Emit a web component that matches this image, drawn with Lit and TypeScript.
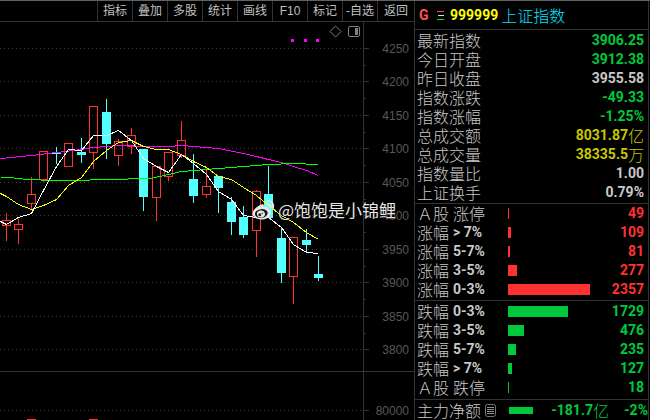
import { LitElement, html, css, svg } from "lit";
import { customElement, property } from "lit/decorators.js";

/** x centre, high, body top, body bottom, low (chart units), rising day */
type Candle = [number, number, number, number, number, boolean];

const CANDLES: Candle[] = [
  [6, 212, 220, 225, 239, true],
  [18, 218, 224, 229, 242, true],
  [31, 176, 194, 203, 208, true],
  [43, 151, 151, 179, 180, true],
  [56, 146, 152, 153, 162, false],
  [68, 143, 143, 166, 166, true],
  [81, 137, 152, 154, 161, false],
  [93, 106, 106, 152, 167, true],
  [106, 98, 112, 143, 157, false],
  [118, 138, 141, 155, 164, true],
  [131, 127, 135, 146, 152, true],
  [143, 149, 149, 196, 209, false],
  [156, 166, 166, 197, 219, true],
  [168, 151, 152, 176, 179, true],
  [181, 120, 140, 155, 156, true],
  [193, 153, 179, 195, 201, false],
  [206, 167, 186, 194, 196, true],
  [218, 176, 176, 187, 211, false],
  [231, 196, 202, 221, 233, false],
  [243, 205, 217, 234, 236, false],
  [256, 189, 191, 230, 255, true],
  [268, 165, 194, 217, 217, false],
  [281, 227, 238, 272, 281, false],
  [293, 237, 237, 276, 302, true],
  [306, 228, 240, 244, 251, false],
  [318, 255, 274, 277, 279, false],
];

const AVERAGES = [
  {
    color: "#ff00ff",
    points:
      "0,158 31,155 56,152 81,149 93,147 106,146 118,145 150,146 168,146 181,145 193,146 218,148 243,153 256,156 268,159 281,162 293,166 306,170 318,175",
  },
  {
    color: "#00ff00",
    points:
      "0,177 13,177 14,178 31,179 50,180 87,180 92,179 125,179 130,178 150,178 168,174 181,171 206,169 218,168 243,166 268,164 293,163 318,164",
  },
  {
    color: "#ffff00",
    points:
      "0,193 6,196 18,204 31,209 43,205 56,199 68,185 81,177 93,161 106,150 118,142 131,140 143,146 156,149 168,149 181,154 193,161 206,167 218,176 231,179 243,187 256,195 268,205 281,215 293,222 306,232 318,239",
  },
  {
    color: "#ffffff",
    points:
      "0,221 6,224 18,217 31,213 43,190 56,166 68,149 81,150 93,135 106,135 118,130 131,140 143,158 156,166 168,172 181,154 193,163 206,174 218,191 231,199 243,215 256,217 268,217 281,227 293,244 306,252 318,253",
  },
];

const LEVELS: [string, number][] = [
  ["4250", 48],
  ["4200", 81],
  ["4150", 115],
  ["4100", 148],
  ["4050", 182],
  ["4000", 215],
  ["3950", 249],
  ["3900", 282],
  ["3850", 316],
  ["3800", 349],
  ["80000", 410],
];
const HALF_LEVELS = [65, 98, 132, 165, 199, 232, 266, 299, 333];

@customElement("kline-chart")
export class KlineChart extends LitElement {
  static styles = css`
    :host {
      display: grid;
      grid-template-columns: minmax(0, 1fr) 51px;
      position: relative;
      min-height: 0;
      overflow: hidden;
    }
    svg {
      display: block;
      width: 100%;
      height: 100%;
    }
    .layer {
      shape-rendering: crispEdges;
      fill: none;
    }
    .grid {
      stroke: #383838;
      stroke-dasharray: 1 3;
    }
    .rule {
      stroke: #333333;
    }
    .up {
      stroke: #ff3232;
    }
    .down {
      stroke: #54ffff;
      fill: #54ffff;
    }
    .mark {
      fill: #ff00ff;
    }
    .volume {
      fill: #ff3232;
    }
    .tool {
      stroke: #808080;
      fill: none;
    }
    .toolfill {
      fill: #808080;
    }
    .scale {
      font: 12px "Liberation Sans", sans-serif;
      fill: #585858;
      text-anchor: end;
    }
    .watermark {
      position: absolute;
      left: 252px;
      top: 176px;
      display: flex;
      align-items: center;
      gap: 3px;
      font: 17px/24px "Noto Sans CJK SC", sans-serif;
      color: #e6e6e6;
      text-shadow: 0 0 2px #000000;
      white-space: nowrap;
    }
    .watermark svg {
      width: 23px;
      height: 22px;
    }
  `;

  private candle([x, high, top, bottom, low, up]: Candle) {
    return svg`<g class=${up ? "up" : "down"}>
      <rect x=${x - 4} y=${top} width="8" height=${bottom - top}></rect>
      ${high < top ? svg`<path d="M${x} ${high}V${top}"></path>` : null}
      ${low > bottom ? svg`<path d="M${x} ${bottom}V${low + 1}"></path>` : null}
    </g>`;
  }

  render() {
    return html`
      <svg role="img" aria-label="K线">
        <g class="layer" transform="translate(0 -21.5)">
          ${LEVELS.map(([, y]) => svg`<line class="grid" x1="0" x2="100%" y1=${y} y2=${y}></line>`)}
          <line class="rule" x1="0" x2="100%" y1="371" y2="371"></line>
        </g>
        <g class="layer" transform="translate(0.5 -21.5)">
          ${CANDLES.map((c) => this.candle(c))}
          ${AVERAGES.map((a) => svg`<polyline points=${a.points} stroke=${a.color}></polyline>`)}
        </g>
        <g class="layer" transform="translate(0 -22)">
          <path class="mark" d="M291 39h3v3h-3zM304 39h3v3h-3zM316 39h3v3h-3z"></path>
          <path class="volume" d="M27 419h9v9h-9zM89 419h9v9h-9z"></path>
        </g>
        <g transform="translate(0 -22)">
          <path class="tool" d="M335.5 26l5.5 5.5-5.5 5.5-5.5-5.5z"></path>
          <rect class="tool" x="348.5" y="26.5" width="11" height="10" rx="1.5"></rect>
          <rect class="toolfill" x="355" y="28" width="3" height="7"></rect>
        </g>
      </svg>
      <svg aria-hidden="true">
        <g class="layer" transform="translate(0.5 -21.5)">
          <path class="rule" d="M0 20V2000M0 371H51"></path>
          ${LEVELS.map(([, y]) => svg`<path class="rule" d="M0 ${y}H5"></path>`)}
          ${HALF_LEVELS.map((y) => svg`<path class="rule" d="M0 ${y}H2"></path>`)}
        </g>
        <g transform="translate(0 -22)">
          ${LEVELS.map(([label, y]) => svg`<text class="scale" x="46" y=${y + 5}>${label}</text>`)}
        </g>
      </svg>
      <div class="watermark">
        <svg viewBox="0 0 23 22" aria-hidden="true">
          <path
            fill="#e9e9e9"
            d="M9.5 5.5C11.4 4.8 12.4 6 11.8 8.1c2.7-1 5-.7 4.6 1.9 2 .6 3 1.9 2.6 3.900C18.400 17.500 14.500 20.500 9.600 20.500 4.300 20.500.5 18 .5 14.600.5 10.800 6 6.700 9.500 5.500z"
          ></path>
          <ellipse cx="9.300" cy="14.500" rx="6.400" ry="4.400" fill="#181818" transform="rotate(-8 9.300 14.500)"></ellipse>
          <ellipse cx="9" cy="15" rx="4" ry="3.500" fill="#e9e9e9" transform="rotate(-15 9 15)"></ellipse>
          <circle cx="7.800" cy="15.800" r="1.500" fill="#202020"></circle>
          <circle cx="10.300" cy="14.200" r=".7" fill="#202020"></circle>
          <path
            d="M15 2.200c4.300-.9 7.400 2.500 6 7M15.500 5.400c2.200-.5 3.700 1 3 3.400"
            fill="none"
            stroke="#e9e9e9"
            stroke-width="1.600"
            stroke-linecap="round"
          ></path>
        </svg>
        <span>@饱饱是小锦鲤</span>
      </div>
    `;
  }
}

interface Quote {
  label: string;
  value: string;
  unit?: string;
  tone: "fall" | "flat" | "money";
}

interface Band {
  name: string;
  range: string;
  count: number;
}

const QUOTES: Quote[] = [
  { label: "最新指数", value: "3906.25", tone: "fall" },
  { label: "今日开盘", value: "3912.38", tone: "fall" },
  { label: "昨日收盘", value: "3955.58", tone: "flat" },
  { label: "指数涨跌", value: "-49.33", tone: "fall" },
  { label: "指数涨幅", value: "-1.25%", tone: "fall" },
  { label: "总成交额", value: "8031.87", unit: "亿", tone: "money" },
  { label: "总成交量", value: "38335.5", unit: "万", tone: "money" },
  { label: "指数量比", value: "1.00", tone: "flat" },
  { label: "上证换手", value: "0.79%", tone: "flat" },
];

const RISING: Band[] = [
  { name: "Ａ股", range: "涨停", count: 49 },
  { name: "涨幅", range: "> 7%", count: 109 },
  { name: "涨幅", range: "5-7%", count: 81 },
  { name: "涨幅", range: "3-5%", count: 277 },
  { name: "涨幅", range: "0-3%", count: 2357 },
];

const FALLING: Band[] = [
  { name: "跌幅", range: "0-3%", count: 1729 },
  { name: "跌幅", range: "3-5%", count: 476 },
  { name: "跌幅", range: "5-7%", count: 235 },
  { name: "跌幅", range: "> 7%", count: 127 },
  { name: "Ａ股", range: "跌停", count: 18 },
];

@customElement("quote-panel")
export class QuotePanel extends LitElement {
  static styles = css`
    :host {
      display: block;
      border-left: 1px solid #333333;
      border-right: 1px solid #333333;
      margin-right: 1px;
      color: #c8c8c8;
      font: 700 14px/19px Roboto, "Noto Sans CJK SC", sans-serif;
    }
    .cjk {
      font: 300 16px/19px "Noto Sans CJK SC", sans-serif;
    }
    .head {
      display: flex;
      align-items: center;
      height: 28px;
      padding-left: 4px;
    }
    .flag {
      width: 18px;
      color: #ff5050;
    }
    .menu {
      width: 8px;
      height: 9px;
      margin-right: 5px;
    }
    .code {
      color: #ffff00;
      margin-right: 3px;
    }
    .name {
      color: #00e4ff;
    }
    .part {
      border-top: 1px solid #333333;
      padding: 1px 4px 1px 2px;
    }
    .rising {
      padding-top: 0;
    }
    .falling {
      padding-bottom: 2px;
    }
    table {
      width: 100%;
      border-collapse: collapse;
      table-layout: fixed;
    }
    th,
    td {
      padding: 0;
      height: 19px;
      white-space: nowrap;
    }
    th {
      text-align: left;
    }
    td {
      text-align: right;
    }
    .label {
      width: 91px;
    }
    .number {
      width: 40px;
    }
    .pair {
      display: flex;
      gap: 4px;
      height: 19px;
    }
    .value {
      display: flex;
      justify-content: flex-end;
      height: 19px;
    }
    .bar {
      height: 11px;
      background: currentColor;
    }
    .fall {
      color: #00c83c;
    }
    .rise {
      color: #ff3232;
    }
    .money {
      color: #c8c800;
    }
    .flow {
      display: flex;
      align-items: center;
      padding: 1px 0 0 2px;
      height: 19px;
    }
    .note {
      width: 13px;
      height: 13px;
      margin: 0 12px 0 3px;
    }
    .flowbar {
      width: 24px;
      height: 7px;
      background: currentColor;
    }
    .amount {
      flex: 1;
    }
    .share {
      width: 39px;
      text-align: right;
    }
  `;

  private bands(items: Band[], tone: "rise" | "fall") {
    return html`<table>
      <colgroup>
        <col class="label" />
        <col />
        <col class="number" />
      </colgroup>
      <tbody>
        ${items.map(
          (b) => html`<tr>
            <th scope="row">
              <div class="pair">
                <span class="cjk">${b.name}</span>
                <span class=${b.range.endsWith("%") ? "range" : "cjk"}>${b.range}</span>
              </div>
            </th>
            <td class=${tone}>
              <div class="bar" style="width:${Math.max(1, Math.floor(b.count * 0.035))}px"></div>
            </td>
            <td class=${tone}>${b.count}</td>
          </tr>`
        )}
      </tbody>
    </table>`;
  }

  render() {
    return html`
      <header class="head">
        <span class="flag">G</span>
        <svg class="menu" viewBox="0 0 8 9" shape-rendering="crispEdges" aria-hidden="true">
          <path d="M0 0h7v1H0z" fill="#ff5050"></path>
          <path d="M1 4h6v1H1z" fill="#e0e0e0"></path>
          <path d="M0 8h7v1H0z" fill="#00e03c"></path>
        </svg>
        <span class="code">999999</span>
        <span class="cjk name">上证指数</span>
      </header>
      <section class="part">
        <table>
          <tbody>
            ${QUOTES.map(
              (q) => html`<tr>
                <th scope="row" class="cjk">${q.label}</th>
                <td class=${q.tone}>
                  <div class="value">
                    <span>${q.value}</span>${q.unit ? html`<span class="cjk">${q.unit}</span>` : null}
                  </div>
                </td>
              </tr>`
            )}
          </tbody>
        </table>
      </section>
      <section class="part rising">${this.bands(RISING, "rise")}</section>
      <section class="part falling">${this.bands(FALLING, "fall")}</section>
      <section class="part flow">
        <span class="cjk">主力净额</span>
        <svg class="note" viewBox="0 0 13 13" aria-hidden="true">
          <rect x="1.500" y=".5" width="10" height="12" rx="2" fill="none" stroke="#777777"></rect>
          <path d="M3 3.500h7M3 5.500h7M3 7.500h7M3 9.500h7" stroke="#909090"></path>
        </svg>
        <span class="fall flowbar"></span>
        <span class="fall value amount"><span>-181.7</span><span class="cjk">亿</span></span>
        <span class="fall share">-2%</span>
      </section>
    `;
  }
}

@customElement("app-root")
export class AppRoot extends LitElement {
  @property({ attribute: false }) tools = ["指标", "叠加", "多股", "统计", "画线", "F10", "标记", "-自选", "返回"];

  static styles = css`
    :host {
      display: grid;
      grid-template-columns: minmax(0, 1fr) 236px;
      box-sizing: border-box;
      min-height: 100vh;
      background: #000000;
      border-top: 1px solid #606262;
    }
    .left {
      display: grid;
      grid-template-rows: 21px minmax(0, 1fr);
      min-width: 0;
    }
    .toolbar {
      display: flex;
      justify-content: flex-end;
      box-sizing: border-box;
      border-bottom: 1px solid #333333;
    }
    button {
      box-sizing: border-box;
      width: 35px;
      padding: 1px 0 0;
      border: 0;
      border-left: 1px solid #333333;
      background: none;
      color: #c0c0c0;
      font: 12px/19px "Liberation Sans", "Noto Sans CJK SC", sans-serif;
      white-space: nowrap;
    }
    button:last-child {
      width: 37px;
    }
  `;

  render() {
    return html`
      <main class="left">
        <nav class="toolbar">${this.tools.map((t) => html`<button type="button">${t}</button>`)}</nav>
        <kline-chart></kline-chart>
      </main>
      <quote-panel></quote-panel>
    `;
  }
}
